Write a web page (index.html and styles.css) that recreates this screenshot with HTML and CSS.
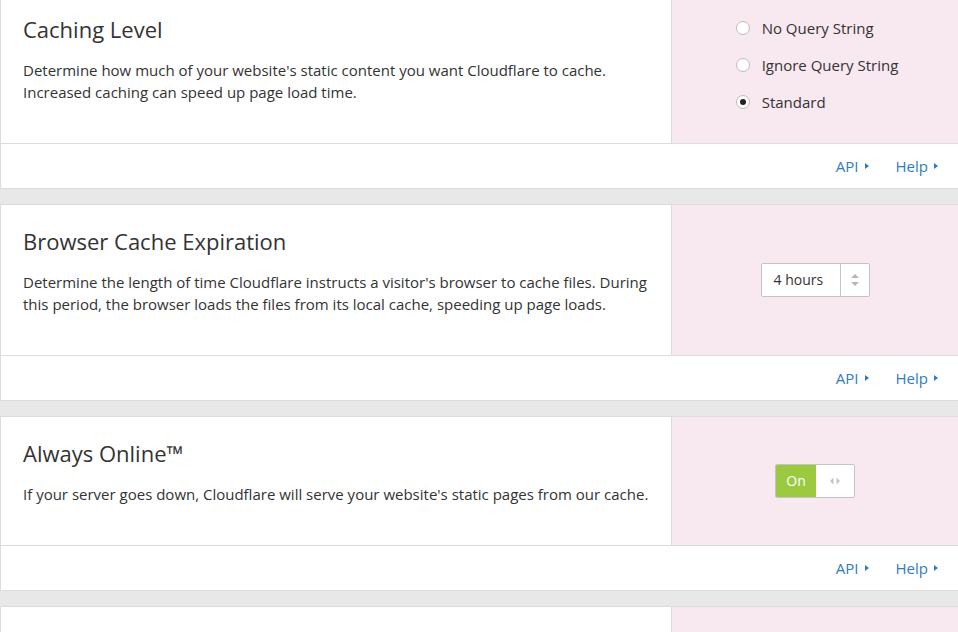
FILE: index.html
```html
<!DOCTYPE html>
<html lang="en">
<head>
  <meta charset="UTF-8">
  <meta name="viewport" content="width=device-width, initial-scale=1.0">
  <title>Caching Configuration</title>
  <link rel="stylesheet" href="styles.css">
</head>
<body>
  <div class="settings">
    <!-- Caching level -->
    <div class="card">
      <div class="card-main">
        <div class="card-body">
          <h3 class="card-title">Caching Level</h3>
          <p class="card-text">Determine how much of your website's static content you want Cloudflare to cache.<br>Increased caching can speed up page load time.</p>
        </div>
        <div class="card-control">
          <div class="radios">
            <label class="radio"><span class="radio-dot"></span>No Query String</label>
            <label class="radio"><span class="radio-dot"></span>Ignore Query String</label>
            <label class="radio"><span class="radio-dot checked"></span>Standard</label>
          </div>
        </div>
      </div>
      <div class="card-footer">
        <a class="footer-link" href="#">API <span class="caret"></span></a>
        <a class="footer-link" href="#">Help <span class="caret"></span></a>
      </div>
    </div>

    <!-- Browser cache -->
    <div class="card">
      <div class="card-main">
        <div class="card-body">
          <h3 class="card-title">Browser Cache Expiration</h3>
          <p class="card-text">Determine the length of time Cloudflare instructs a visitor's browser to cache files. During this period, the browser loads the files from its local cache, speeding up page loads.</p>
        </div>
        <div class="card-control">
          <div class="select">
            <span class="select-value">4 hours</span>
            <span class="select-arrows">
              <svg width="8" height="14" viewBox="0 0 8 14"><path d="M0 5 L4 1 L8 5 Z M0 9 L4 13 L8 9 Z" fill="#b5b5b5"/></svg>
            </span>
          </div>
        </div>
      </div>
      <div class="card-footer">
        <a class="footer-link" href="#">API <span class="caret"></span></a>
        <a class="footer-link" href="#">Help <span class="caret"></span></a>
      </div>
    </div>

    <!-- Always online -->
    <div class="card">
      <div class="card-main">
        <div class="card-body">
          <h3 class="card-title">Always Online™</h3>
          <p class="card-text">If your server goes down, Cloudflare will serve your website's static pages from our cache.</p>
        </div>
        <div class="card-control">
          <div class="toggle">
            <span class="toggle-on">On</span>
            <span class="toggle-handle">
              <svg width="10" height="8" viewBox="0 0 10 8"><path d="M3.5 0.5 L0 4 L3.5 7.5 Z M6.5 0.5 L10 4 L6.5 7.5 Z" fill="#c4c4c4"/></svg>
            </span>
          </div>
        </div>
      </div>
      <div class="card-footer">
        <a class="footer-link" href="#">API <span class="caret"></span></a>
        <a class="footer-link" href="#">Help <span class="caret"></span></a>
      </div>
    </div>

    <div class="card">
      <div class="card-main">
        <div class="card-body">
          <h3 class="card-title">&nbsp;</h3>
          <p class="card-text">&nbsp;</p>
        </div>
        <div class="card-control"></div>
      </div>
    </div>
  </div>
</body>
</html>
```

FILE: styles.css
```css
* {
  margin: 0;
  padding: 0;
  box-sizing: border-box;
}

body {
  background-color: #e8e8e8;
  overflow: hidden;
  font-family: "Open Sans", "Noto Sans", sans-serif;
  color: #333;
}

.settings {
  margin-top: -8px;
}

.card {
  background-color: #fff;
  border: 1px solid #dcdcdc;
  border-right: none;
  margin-bottom: 15px;
}

.card-main {
  display: flex;
}

.card-body {
  flex: 1;
  padding: 22px 22px 40px 22px;
}

.card-title {
  font-size: 22px;
  font-weight: 400;
  line-height: 28px;
  margin-bottom: 16px;
}

.card-text {
  font-size: 15px;
  line-height: 22px;
}

.card-control {
  width: 287px;
  background-color: #f8e8ef;
  border-left: 1px solid #dcdcdc;
  display: flex;
  align-items: center;
  justify-content: center;
}

/* radio list */
.radios {
  display: flex;
  flex-direction: column;
  gap: 15px;
  margin-left: 4px;
  margin-bottom: 6px;
}

.radio {
  display: flex;
  align-items: center;
  font-size: 15px;
  line-height: 22px;
  color: #333;
}

.radio-dot {
  width: 14px;
  height: 14px;
  border: 1px solid #bdbdbd;
  border-radius: 50%;
  background-color: #fff;
  margin-right: 12px;
  position: relative;
}

.radio-dot.checked::after {
  content: "";
  position: absolute;
  top: 3px;
  left: 3px;
  width: 6px;
  height: 6px;
  border-radius: 50%;
  background-color: #222;
}

/* select box */
.select {
  display: flex;
  height: 34px;
  border: 1px solid #c4c4c4;
  border-radius: 2px;
  background-color: #fff;
}

.select-value {
  width: 78px;
  padding-left: 12px;
  font-size: 14px;
  line-height: 32px;
}

.select-arrows {
  width: 29px;
  border-left: 1px solid #c4c4c4;
  display: flex;
  align-items: center;
  justify-content: center;
}

/* on/off toggle */
.toggle {
  display: flex;
  height: 34px;
  border: 1px solid #c4c4c4;
  border-radius: 2px;
  overflow: hidden;
  background-color: #fff;
}

.toggle-on {
  width: 40px;
  background-color: #9bc93f;
  color: #fff;
  font-size: 14px;
  line-height: 32px;
  text-align: center;
}

.toggle-handle {
  width: 38px;
  display: flex;
  align-items: center;
  justify-content: center;
}

/* footer links */
.card-footer {
  height: 45px;
  border-top: 1px solid #dcdcdc;
  display: flex;
  justify-content: flex-end;
  align-items: center;
  gap: 27px;
  padding-right: 20px;
}

.footer-link {
  color: #2f7bbf;
  text-decoration: none;
  font-size: 15px;
  display: flex;
  align-items: center;
}

.caret {
  display: inline-block;
  width: 0;
  height: 0;
  margin-left: 6px;
  border-top: 3px solid transparent;
  border-bottom: 3px solid transparent;
  border-left: 4px solid #2f7bbf;
}
```
